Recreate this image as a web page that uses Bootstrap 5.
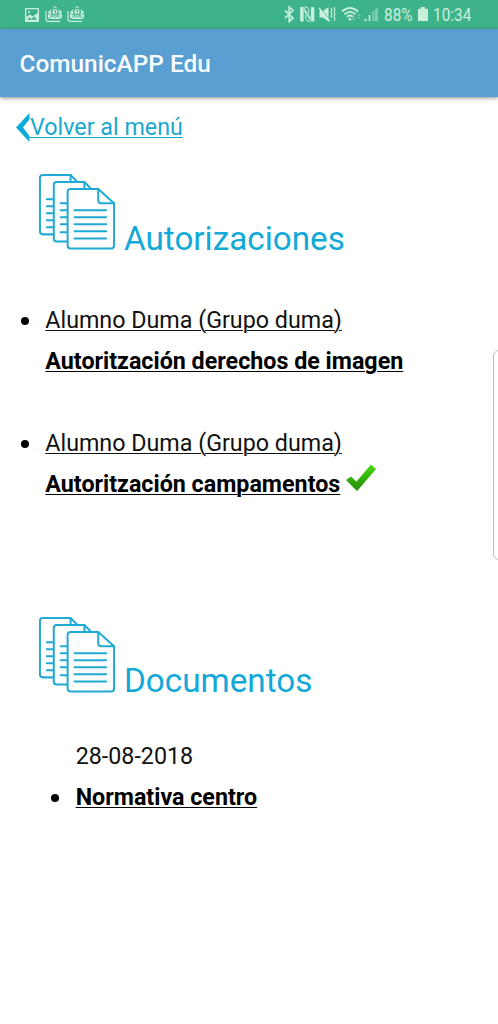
<!DOCTYPE html>
<html lang="es">
<head>
<meta charset="utf-8">
<meta name="viewport" content="width=device-width, initial-scale=1">
<title>ComunicAPP Edu</title>
<link href="https://cdn.jsdelivr.net/npm/bootstrap@5.3.0/dist/css/bootstrap.min.css" rel="stylesheet">
<style>
body{font-family:Roboto,"Liberation Sans",sans-serif;font-size:23.27px;line-height:41px;color:#111;background:#fff;height:1024px;overflow:hidden}
.status-bar{height:29px;background:#3eb28a;color:#c9f0dd;padding:0 25px 0 24px;font-size:17.5px;line-height:30px}
.status-bar svg{display:block;flex:none}
.status-bar .pct{width:29px;margin-left:4px;white-space:nowrap}
.status-bar .fit{display:inline-block;transform-origin:0 50%;transform:scaleX(.88)}
.status-bar .clock{width:40px;margin-left:5px;white-space:nowrap}
.app-bar{height:68px;background:#5a9fd2;box-shadow:0 1px 4px rgba(0,0,0,.45);padding-left:19.5px}
.app-title{font-size:24.4px;font-weight:500;color:#f8fdff;line-height:70px}
.back-link{color:#19a8cf;height:41px;margin:9px 0 0 16px;text-decoration:none}
.back-link span{padding-top:2px}
.back-link span,.docs a{text-decoration:underline;text-decoration-thickness:1.3px;text-underline-offset:2px}
.section-head{color:#12a9d8;margin-left:36px;height:84px}
.section-head h2{font-size:33.25px;font-weight:400;line-height:40px;margin:0 0 -3px 7px}
.docs{margin:0;padding-left:45.3px;list-style:none}
.docs a{color:#111}
.docs a.fw-bold{color:#000}
.docs .dotted::before{content:"";display:inline-block;width:8px;height:8px;border-radius:50%;background:#000;margin:0 16.3px 0 -24.3px;vertical-align:3px}
.edge-handle{right:-8px;top:350px;width:13px;height:210px;border:1px solid #bcbcbc;border-radius:6px}
</style>
</head>
<body class="position-relative">
<svg width="0" height="0" class="position-absolute">
<defs>
<symbol id="papers" viewBox="0 0 82 82" preserveAspectRatio="none">
<g fill="#fff" stroke="#20a9d2" stroke-width="2" stroke-linejoin="round" stroke-linecap="round">
<path d="M7 3H35L49 17V59Q49 62 46 62H7Q4 62 4 59V6Q4 3 7 3Z"/><path fill="none" d="M35 3V14Q35 17 38 17H49M11 27H20M11 34H20M11 41H20M11 48H20M11 55H20" />
<path d="M21 10H49L63 24V66Q63 69 60 69H21Q18 69 18 66V13Q18 10 21 10Z"/><path fill="none" d="M49 10V21Q49 24 52 24H63M25 31H34M25 38H34M25 45H34M25 52H34M25 60H34"/>
<path d="M35 17H63L79 31V73Q79 76 76 76H35Q32 76 32 73V20Q32 17 35 17Z"/><path fill="none" d="M63 17V28Q63 31 66 31H79M39 38H71M39 45H71M39 52H71M39 59H71M39 66H71"/>
</g></symbol>
<symbol id="mail" viewBox="0 0 18 18">
<path d="M1 6V14Q1 16.3 3.5 16.3H15" fill="none" stroke="#c9f0dd" stroke-width="1.2"/>
<path d="M3 7L10 1L17 7V14H3Z" fill="#c9f0dd"/>
<circle cx="10" cy="6.5" r="4.1" fill="#3eb28a"/><circle cx="10" cy="6.5" r="2.6" fill="#c9f0dd"/><path d="M9 5.5H10.5V8.2" fill="none" stroke="#3eb28a"/>
<path d="M3 8L10 12.5L17 8M3 14L7.5 11M17 14L12.5 11" fill="none" stroke="#3eb28a" stroke-width=".9"/>
</symbol>
</defs></svg>

<div class="status-bar d-flex align-items-center">
<svg width="16" height="16" viewBox="0 0 16 16"><path fill="#c9f0dd" fill-rule="evenodd" d="M2 1H14Q15 1 15 2V14Q15 15 14 15H2Q1 15 1 14V2Q1 1 2 1ZM2.3 2.3V10L6 7.5 8.5 9.5 13.7 6V2.3ZM3 12.8H13L10.3 9.2 7.5 12 5.7 10.5Z"/><circle cx="5" cy="5" r="1" fill="#c9f0dd"/></svg>
<svg width="18" height="18" style="margin:-1px 0 0 5px"><use href="#mail"/></svg>
<svg width="18" height="18" class="ms-1" style="margin-top:-1px"><use href="#mail"/></svg>
<div class="d-flex align-items-center ms-auto">
<svg width="97" height="20" viewBox="283 5 97 20">
<path d="M285 10.3L293 18.2 289.2 21.5V7L293 10.3 285 18.2" fill="none" stroke="#c9f0dd" stroke-width="1.7"/>
<path d="M300.2 7H303.6V21.4H301.5Q300.2 21.4 300.2 20.2ZM310.9 7H313Q314.3 7 314.3 8.2V21.4H310.9Z" fill="#c9f0dd"/><path d="M303 8L311.5 20.5" stroke="#a5ddc6" stroke-width="2.6"/><path d="M304.5 7H307L308.8 9.5V13M305.7 15V18.5L307.8 21.4H310" fill="none" stroke="#c9f0dd" stroke-width="1"/>
<path d="M319.5 11H323L328.5 7V21.5L323 17.5H319.5Z" fill="#c9f0dd"/><path d="M320 7.5L330.5 21" stroke="#3eb28a" stroke-width="1"/><path d="M319 8L329.8 21.3" stroke="#c9f0dd" stroke-width="1.5"/>
<path d="M331 8L332 10 331 12 332 14 331 16 332 18M334 7L335 9.4 334 11.6 335 14 334 16.4 335 18.6 334 21" fill="none" stroke="#c9f0dd" stroke-width="1.1"/>
<path d="M342 11.5Q350 4.5 358 11.5M344.5 14.2Q350 9.5 355.5 14.2M347 16.8Q350 14.3 353 16.8" fill="none" stroke="#c9f0dd" stroke-width="1.8"/><circle cx="350" cy="19.3" r="1.4" fill="#c9f0dd"/>
<path d="M354 15.5V20M352.5 18.5L354 20 355.5 18.5M359 19V14.5M357.5 16L359 14.5 360.5 16" fill="none" stroke="#79cbaf"/>
<path d="M364.5 19H366.5V21H364.5ZM368.7 15H370.3V21H368.7Z" fill="#c9f0dd"/><path d="M372.3 11.5H374.2V21H372.3ZM374.8 9.5L378 8V21H374.8Z" fill="#84cbb0"/>
</svg>
<span class="pct"><span class="fit">88%</span></span>
<svg width="10" height="16" viewBox="0 0 10 16" style="margin:-2px 0 0 5px"><path d="M3 1H7V2.7H9Q10 2.7 10 3.7V15H0V3.7Q0 2.7 1 2.7H3Z" fill="#c9f0dd"/></svg>
<span class="clock"><span class="fit">10:34</span></span>
</div>
</div>
<nav class="app-bar"><span class="app-title">ComunicAPP Edu</span></nav>
<main>
<a href="#" class="back-link d-flex align-items-center"><svg width="14" height="30" viewBox="0 0 14 30"><path d="M13.5 1V7.2L7 15.5 13.5 24V30L0 15.5Z" fill="#0da9d9"/></svg><span>Volver al menú</span></a>
<section>
<div class="section-head d-flex align-items-end" style="margin-top:25px"><svg width="81" height="82.5" class="align-self-start"><use href="#papers"/></svg><h2>Autorizaciones</h2></div>
<ul class="docs" style="margin-top:44px">
<li class="dotted"><a href="#">Alumno Duma (Grupo duma)</a><br><a href="#" class="fw-bold">Autoritzación derechos de imagen</a></li>
<li class="dotted" style="margin-top:41px"><a href="#">Alumno Duma (Grupo duma)</a><br><span class="d-flex"><a href="#" class="fw-bold">Autoritzación campamentos</a><svg width="32" height="30" viewBox="0 0 32 30" style="margin:-1px 0 0 5px"><defs><linearGradient id="green" x2="0" y2="1"><stop stop-color="#45dd0b"/><stop offset="1" stop-color="#238b0c"/></linearGradient></defs><path d="M1 17L6 13.5 11.5 18.5 26 1.5 31 6 13 27Q12 28 11 27Z" fill="url(#green)"/></svg></span></li>
</ul>
</section>
<section>
<div class="section-head d-flex align-items-end" style="margin-top:110px"><svg width="81" height="82.5" class="align-self-start"><use href="#papers"/></svg><h2 style="margin-bottom:-2px">Documentos</h2></div>
<div style="margin:37px 0 0 75.7px">28-08-2018</div>
<ul class="docs" style="padding-left:75.7px"><li class="dotted"><a href="#" class="fw-bold">Normativa centro</a></li></ul>
</section>
</main>
<div class="edge-handle position-absolute"></div>
</body>
</html>
